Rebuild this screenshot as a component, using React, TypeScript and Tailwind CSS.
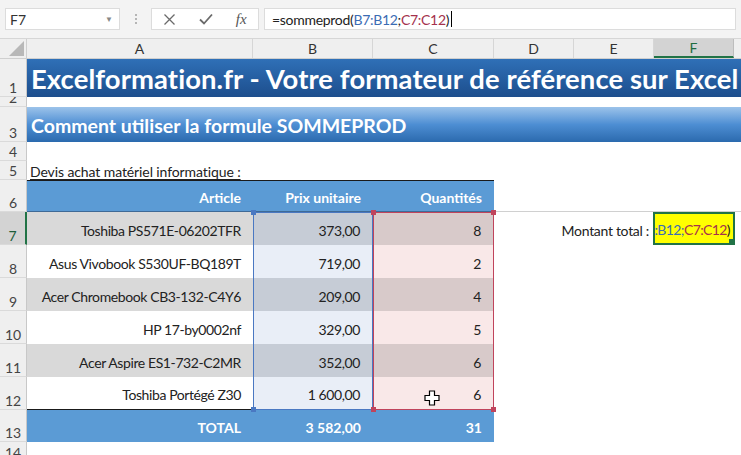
import React from "react";

const font = { fontFamily: "Lato, 'Open Sans', sans-serif" };

const items = [
  { name: "Toshiba PS571E-06202TFR", price: "373,00", qty: "8" },
  { name: "Asus Vivobook S530UF-BQ189T", price: "719,00", qty: "2" },
  { name: "Acer Chromebook CB3-132-C4Y6", price: "209,00", qty: "4" },
  { name: "HP 17-by0002nf", price: "329,00", qty: "5" },
  { name: "Acer Aspire ES1-732-C2MR", price: "352,00", qty: "6" },
  { name: "Toshiba Portégé Z30", price: "1 600,00", qty: "6" },
];

const RowHead = ({ n, h, active }: { n: string; h: string; active?: boolean }) => (
  <div
    className={`w-[27px] shrink-0 ${h} flex items-end justify-center pb-[1px] text-[14px] leading-none border-b border-[#dadada] overflow-hidden ${
      active ? "bg-[#d3d3d3] text-[#1e5e3a] border-r-2 border-r-[#217346]" : "bg-[#efefef] text-[#444] border-r border-r-[#c8c8c8]"
    }`}
  >
    {n}
  </div>
);

const Handle = ({ color, pos }: { color: string; pos: string }) => (
  <span className={`absolute ${pos} w-[5px] h-[5px] ${color} z-10`} />
);

export default function App() {
  return (
    <div className="w-[741px] h-[455px] overflow-hidden bg-white text-[#222] relative" style={font}>
      {/* formula toolbar */}
      <div className="h-[39px] bg-[#f3f3f3] flex items-center px-[5px] border-b border-[#d6d6d6]">
        <div className="w-[115px] h-[22px] bg-white border border-[#dcdcdc] flex items-center justify-between pl-[4px] pr-[6px] text-[14px] text-[#333]">
          <span>F7</span>
          <span className="text-[8px] text-[#888]">▼</span>
        </div>
        <div className="w-[31px] flex flex-col items-center gap-[2px]">
          <span className="w-[2px] h-[2px] bg-[#b5b5b5]" />
          <span className="w-[2px] h-[2px] bg-[#b5b5b5]" />
          <span className="w-[2px] h-[2px] bg-[#b5b5b5]" />
        </div>
        <div className="w-[108px] h-[22px] bg-white border border-[#dcdcdc] flex items-center justify-around text-[#666]">
          <svg width="13" height="13" viewBox="0 0 13 13">
            <path d="M1.5 1.5 L11.5 11.5 M11.5 1.5 L1.5 11.5" stroke="#6a6a6a" strokeWidth="1.3" />
          </svg>
          <svg width="14" height="12" viewBox="0 0 14 12">
            <path d="M1 6.5 L5 10.5 L13 1.5" stroke="#6a6a6a" strokeWidth="1.8" fill="none" />
          </svg>
          <span className="text-[15px] italic text-[#555]" style={{ fontFamily: "'Liberation Serif', serif" }}>
            fx
          </span>
        </div>
        <div className="ml-[5px] flex-1 h-[22px] bg-white border border-[#dcdcdc] flex items-center pl-[7px] text-[14px] tracking-[-0.3px]">
          <span className="text-[#222]">=sommeprod(</span>
          <span className="text-[#3b6cb4]">B7:B12</span>
          <span className="text-[#222]">;</span>
          <span className="text-[#a5314c]">C7:C12</span>
          <span className="text-[#222]">)</span>
          <span className="w-px h-[16px] bg-black ml-[2px]" />
        </div>
      </div>

      {/* column headers */}
      <div className="flex h-[20px] bg-[#efefef] text-[14px] text-[#333] border-b border-[#cfcfcf]">
        <div className="w-[27px] border-r border-[#cfcfcf] flex items-end justify-end p-[2px]">
          <svg width="15" height="15" viewBox="0 0 15 15">
            <path d="M15 0 L15 15 L0 15 Z" fill="#b8b8b8" />
          </svg>
        </div>
        <div className="w-[226px] border-r border-[#d6d6d6] flex items-center justify-center">A</div>
        <div className="w-[120px] border-r border-[#d6d6d6] flex items-center justify-center">B</div>
        <div className="w-[121px] border-r border-[#d6d6d6] flex items-center justify-center">C</div>
        <div className="w-[80px] border-r border-[#d6d6d6] flex items-center justify-center">D</div>
        <div className="w-[80px] border-r border-[#d6d6d6] flex items-center justify-center">E</div>
        <div className="w-[80px] bg-[#d3d3d3] border-b-2 border-[#217346] border-r border-r-[#bdbdbd] flex items-center justify-center text-[#1e6b3f]">
          F
        </div>
        <div className="flex-1" />
      </div>

      {/* row 1 */}
      <div className="flex">
        <RowHead n="1" h="h-[38px]" />
        <div className="flex-1 h-[38px] bg-linear-to-b from-[#2f70b7] to-[#1d4e8d] flex items-center pl-[4px] pt-[2px] overflow-hidden whitespace-nowrap">
          <span className="text-white font-bold text-[27.4px] tracking-[0.1px]">
            Excelformation.fr - Votre formateur de référence sur Excel
          </span>
        </div>
      </div>
      {/* row 2 */}
      <div className="flex">
        <RowHead n="2" h="h-[10px]" />
        <div className="flex-1 h-[10px]" />
      </div>
      {/* row 3 */}
      <div className="flex">
        <RowHead n="3" h="h-[35px]" />
        <div className="flex-1 h-[35px] bg-linear-to-b from-[#9cc3ea] via-[#4d8ed3] to-[#2b6aae] flex items-center pl-[4px] pt-[2px] whitespace-nowrap">
          <span className="text-white font-bold text-[19.5px]">Comment utiliser la formule SOMMEPROD</span>
        </div>
      </div>
      {/* row 4 */}
      <div className="flex">
        <RowHead n="4" h="h-[19px]" />
        <div className="flex-1" />
      </div>
      {/* row 5 */}
      <div className="flex">
        <RowHead n="5" h="h-[19px]" />
        <div className="flex-1 flex items-end pl-[3px] pb-[1px] text-[14px] leading-none whitespace-nowrap tracking-[-0.1px]">
          <span className="underline underline-offset-2">Devis achat matériel informatique :</span>
        </div>
      </div>
      {/* row 6 header */}
      <div className="flex">
        <RowHead n="6" h="h-[32px]" />
        <div className="flex h-[32px] bg-[#5b9bd5] border-t border-[#1a1a1a] border-b border-b-[#3f6a96] text-white font-bold text-[14px]">
          <div className="w-[226px] flex items-center justify-end pr-[12px] pt-[3px]">Article</div>
          <div className="w-[120px] flex items-center justify-end pr-[12px] pt-[3px]">Prix unitaire</div>
          <div className="w-[121px] flex items-center justify-end pr-[12px] pt-[3px]">Quantités</div>
        </div>
        <div className="flex-1 h-[32px] border-b border-[#d0d0d0]" />
      </div>

      {/* data rows 7-12 */}
      {items.map((it, i) => {
        const gray = i % 2 === 0;
        const first = i === 0;
        const last = i === items.length - 1;
        return (
          <div className="flex" key={i}>
            <RowHead n={String(7 + i)} h="h-[33px]" active={first} />
            <div className="flex h-[33px] text-[14px] tracking-[-0.4px] text-[#222]">
              <div
                className={`w-[226px] flex items-center justify-end pr-[12px] pt-[3px] ${gray ? "bg-[#d9d9d9]" : "bg-white"} ${
                  last ? "border-b border-[#1a1a1a]" : ""
                }`}
              >
                {it.name}
              </div>
              <div
                className={`relative w-[120px] flex items-center justify-end pr-[12px] pt-[3px] border-x border-[#4a78c2] ${
                  gray ? "bg-[#c6ccd6]" : "bg-[#e9eef7]"
                } ${first ? "border-t" : ""} ${last ? "border-b" : ""}`}
              >
                {first && <Handle color="bg-[#4a78c2]" pos="-top-[3px] -left-[3px]" />}
                {last && <Handle color="bg-[#4a78c2]" pos="-bottom-[3px] -left-[3px]" />}
                {it.price}
              </div>
              <div
                className={`relative w-[121px] flex items-center justify-end pr-[12px] pt-[3px] border-x border-[#c0445c] ${
                  gray ? "bg-[#d8caca]" : "bg-[#f9e8e8]"
                } ${first ? "border-t" : ""} ${last ? "border-b" : ""}`}
              >
                {first && <Handle color="bg-[#c0445c]" pos="-top-[3px] -left-[3px]" />}
                {first && <Handle color="bg-[#c0445c]" pos="-top-[3px] -right-[3px]" />}
                {last && <Handle color="bg-[#c0445c]" pos="-bottom-[3px] -left-[3px]" />}
                {last && <Handle color="bg-[#c0445c]" pos="-bottom-[3px] -right-[3px]" />}
                {last && (
                  <svg className="absolute left-[50px] top-[13px]" width="16" height="16" viewBox="0 0 16 16">
                    <path
                      d="M5.5 1 H10.5 V5.5 H15 V10.5 H10.5 V15 H5.5 V10.5 H1 V5.5 H5.5 Z"
                      fill="white"
                      stroke="black"
                      strokeWidth="1.2"
                    />
                  </svg>
                )}
                {it.qty}
              </div>
            </div>
            {first ? (
              <div className="flex h-[33px] text-[14px] tracking-[-0.3px]">
                <div className="w-[159px] flex items-center justify-end pr-[4px] pt-[3px] whitespace-nowrap">Montant total :</div>
                <div className="relative w-[82px] h-[33px] bg-[#ffff00] border-2 border-[#217346] flex items-end justify-end pr-[2px] pb-[3px] overflow-hidden whitespace-nowrap tracking-[-0.6px]">
                  <span className="text-[#3b6cb4]">:B12;</span>
                  <span className="text-[#a5314c]">C7:C12</span>
                  <span>)</span>
                  <span className="w-px h-[15px] bg-black ml-px mb-[1px]" />
                  <span className="absolute -bottom-[1px] -right-[1px] w-[5px] h-[5px] bg-[#217346]" />
                </div>
              </div>
            ) : (
              <div className="flex-1" />
            )}
          </div>
        );
      })}

      {/* row 13 total */}
      <div className="flex">
        <RowHead n="13" h="h-[32px]" />
        <div className="flex h-[32px] bg-[#5b9bd5] text-white font-bold text-[14px]">
          <div className="w-[226px] flex items-center justify-end pr-[12px] pt-[3px]">TOTAL</div>
          <div className="w-[120px] flex items-center justify-end pr-[12px] pt-[3px]">3 582,00</div>
          <div className="w-[121px] flex items-center justify-end pr-[12px] pt-[3px]">31</div>
        </div>
      </div>
      {/* row 14 */}
      <div className="flex">
        <RowHead n="14" h="h-[20px]" />
        <div className="flex-1" />
      </div>
    </div>
  );
}
